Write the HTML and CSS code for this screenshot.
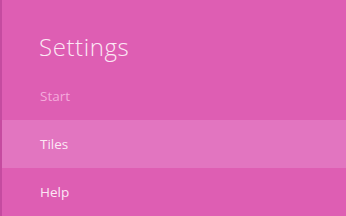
FILE: index.html
```html
<!DOCTYPE html>
<html>
<head>
<meta charset="utf-8">
<link rel="stylesheet" href="styles.css">
</head>
<body>
<div class="panel">
  <div class="title">Settings</div>
  <div class="item item-dim">Start</div>
  <div class="item item-active">Tiles</div>
  <div class="item">Help</div>
</div>
</body>
</html>
```

FILE: styles.css
```css
html, body {
  margin: 0;
  padding: 0;
  width: 346px;
  height: 216px;
  overflow: hidden;
  background: #de5eb3;
}
.panel {
  height: 216px;
  border-left: 2px solid #c54ba0;
  display: flex;
  flex-direction: column;
  font-family: "Open Sans", "Noto Sans", sans-serif;
  color: #fce8f5;
}
.title {
  height: 72px;
  box-sizing: border-box;
  padding: 31px 0 0 37px;
  font-size: 24px;
  font-weight: 300;
  letter-spacing: 0.6px;
  line-height: 32px;
}
.item {
  height: 48px;
  display: flex;
  align-items: center;
  padding-left: 38px;
  font-size: 13.5px;
  font-weight: 400;
}
.item-dim {
  color: #f4aadc;
}
.item-active {
  background: #e275c0;
  height: 49px;
}
```
